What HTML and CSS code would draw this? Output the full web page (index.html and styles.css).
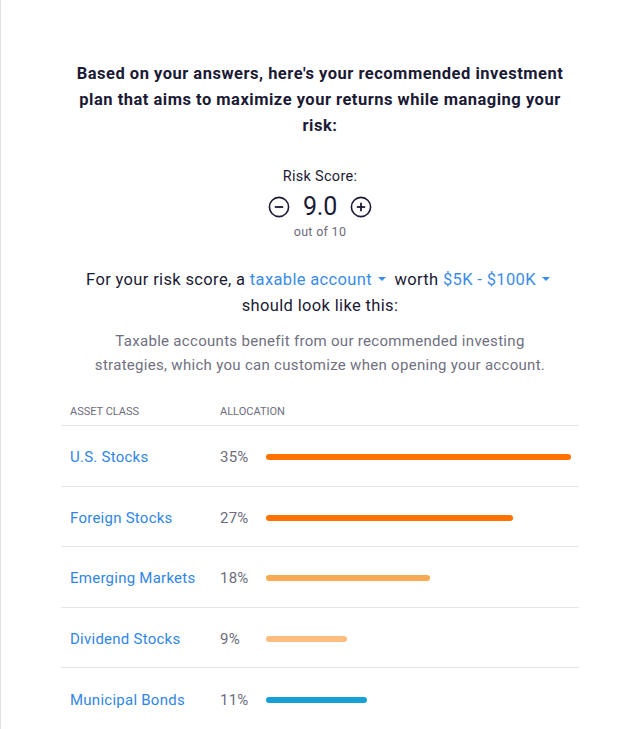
FILE: index.html
```html
<!DOCTYPE html>
<html lang="en">
<head>
<meta charset="utf-8">
<title>Recommended plan</title>
<link rel="stylesheet" href="styles.css">
</head>
<body>
<div class="page">
  <main class="plan">
    <h1 class="intro">Based on your answers, here's your recommended investment plan that aims to maximize your returns while managing your risk:</h1>

    <section class="score">
      <div class="score-label">Risk Score:</div>
      <div class="score-row">
        <button class="round-btn" aria-label="Decrease">
          <svg viewBox="0 0 22 22" width="22" height="22"><circle cx="11" cy="11" r="9.6" fill="none" stroke="#1b1a35" stroke-width="1.6"/><line x1="6.8" y1="11" x2="15.2" y2="11" stroke="#1b1a35" stroke-width="1.8"/></svg>
        </button>
        <span class="score-value">9.0</span>
        <button class="round-btn" aria-label="Increase">
          <svg viewBox="0 0 22 22" width="22" height="22"><circle cx="11" cy="11" r="9.6" fill="none" stroke="#1b1a35" stroke-width="1.6"/><line x1="6.8" y1="11" x2="15.2" y2="11" stroke="#1b1a35" stroke-width="1.8"/><line x1="11" y1="6.8" x2="11" y2="15.2" stroke="#1b1a35" stroke-width="1.8"/></svg>
        </button>
      </div>
      <div class="score-sub">out of 10</div>
    </section>

    <p class="sentence">For your risk score, a <span class="dd">taxable account<span class="caret"></span></span> worth <span class="dd">$5K - $100K<span class="caret"></span></span><br>should look like this:</p>

    <p class="desc">Taxable accounts benefit from our recommended investing strategies, which you can customize when opening your account.</p>

    <div class="table">
      <div class="thead">
        <span class="c1">ASSET CLASS</span>
        <span class="c2">ALLOCATION</span>
      </div>
      <div class="row">
        <span class="c1 name">U.S. Stocks</span>
        <span class="c2 pct">35%</span>
        <span class="track"><span class="bar b1" style="width:100%"></span></span>
      </div>
      <div class="row">
        <span class="c1 name">Foreign Stocks</span>
        <span class="c2 pct">27%</span>
        <span class="track"><span class="bar b1" style="width:81%"></span></span>
      </div>
      <div class="row">
        <span class="c1 name">Emerging Markets</span>
        <span class="c2 pct">18%</span>
        <span class="track"><span class="bar b2" style="width:53.8%"></span></span>
      </div>
      <div class="row">
        <span class="c1 name">Dividend Stocks</span>
        <span class="c2 pct">9%</span>
        <span class="track"><span class="bar b3" style="width:26.6%"></span></span>
      </div>
      <div class="row">
        <span class="c1 name">Municipal Bonds</span>
        <span class="c2 pct">11%</span>
        <span class="track"><span class="bar b4" style="width:33.1%"></span></span>
      </div>
    </div>
  </main>
</div>
</body>
</html>
```

FILE: styles.css
```css
* { box-sizing: border-box; }
html, body { margin: 0; padding: 0; background: #fff; }
body {
  font-family: Roboto, "Liberation Sans", Arial, sans-serif;
  color: #1b1a35;
}
.page {
  border-left: 1px solid #e2e2e2;
  min-height: 729px;
  padding-top: 61px;
}
.plan {
  width: 518px;
  margin-left: 60px;
}
.intro {
  margin: 0 auto;
  width: 500px;
  font-size: 16.5px;
  font-weight: 700;
  line-height: 26px;
  text-align: center;
  letter-spacing: 0.5px;
}
.score {
  display: flex;
  flex-direction: column;
  align-items: center;
  margin-top: 28px;
}
.score-label {
  font-size: 14.5px;
  line-height: 20px;
  letter-spacing: 0.3px;
}
.score-row {
  display: flex;
  align-items: center;
  gap: 11px;
  margin-top: 4px;
  height: 32px;
}
.round-btn {
  border: 0;
  background: none;
  padding: 0;
  width: 22px;
  height: 22px;
  display: flex;
}
.score-value {
  font-size: 25px;
  line-height: 32px;
  letter-spacing: -0.3px;
  min-width: 38px;
  text-align: center;
}
.score-sub {
  font-size: 12.5px;
  line-height: 16px;
  color: #6d6c7c;
  margin-top: 1px;
  letter-spacing: 0.3px;
}
.sentence {
  margin: 27px 0 0;
  text-align: center;
  font-size: 16.5px;
  line-height: 26px;
  letter-spacing: 0.35px;
}
.dd {
  color: #3b8ce9;
}
.caret {
  display: inline-block;
  width: 0;
  height: 0;
  border-left: 4px solid transparent;
  border-right: 4px solid transparent;
  border-top: 4px solid #3b8ce9;
  margin: 0 4px 3px 6px;
  vertical-align: middle;
}
.desc {
  margin: 10px auto 0;
  width: 470px;
  text-align: center;
  font-size: 15px;
  line-height: 24px;
  color: #707080;
  letter-spacing: 0.3px;
}
.table {
  margin-top: 22px;
}
.thead {
  display: flex;
  align-items: center;
  height: 27px;
  padding-top: 2px;
  padding-bottom: 4px;
  border-bottom: 1px solid #e6e6e9;
  font-size: 11px;
  color: #6d6c7c;
}
.c1 {
  width: 159px;
  padding-left: 9px;
  flex: none;
}
.c2 {
  width: 46px;
  flex: none;
}
.row {
  display: flex;
  align-items: center;
  height: 60.5px;
  padding-top: 3px;
  border-bottom: 1px solid #e6e6e9;
  font-size: 15px;
  letter-spacing: 0.25px;
}
.row:last-child { border-bottom: 0; }
.name { color: #3086e6; }
.pct { color: #6d6c7c; }
.track {
  flex: 1;
  margin-right: 8px;
  display: flex;
}
.bar {
  display: block;
  height: 6px;
  border-radius: 3px;
}
.b1 { background: #ff7200; }
.b2 { background: #f9a953; }
.b3 { background: #fdbd80; }
.b4 { background: #15a1d6; }
```
